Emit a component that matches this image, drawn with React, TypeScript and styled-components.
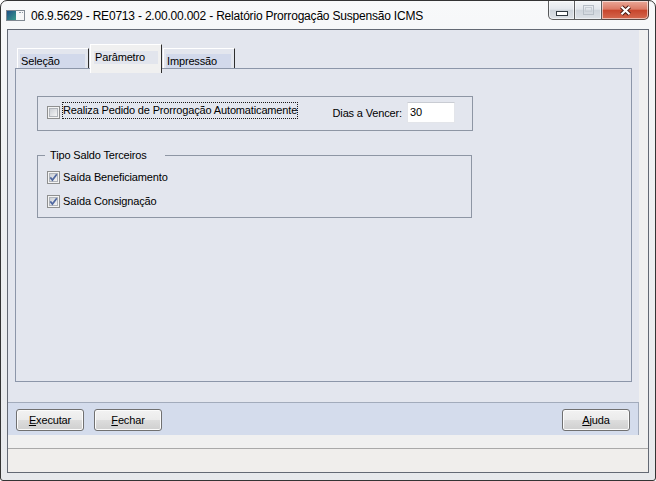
import React from "react";
import styled, { createGlobalStyle } from "styled-components";

const GlobalStyle = createGlobalStyle`
  html, body {
    margin: 0;
    padding: 0;
    background: #ffffff;
    overflow: hidden;
  }
  body {
    font-family: "Liberation Sans", Arial, sans-serif;
    font-size: 11px;
    color: #000;
  }
`;

const tabs = ["Seleção", "Parâmetro", "Impressão"];
const activeTab = 1;

const TitleIcon = () => (
  <svg width="19" height="11" viewBox="0 0 19 11">
    <defs>
      <linearGradient id="ti" x1="0" y1="0" x2="1" y2="1">
        <stop offset="0" stopColor="#1d4f86" />
        <stop offset="1" stopColor="#3c9c8c" />
      </linearGradient>
    </defs>
    <rect x="0.5" y="0.5" width="18" height="10" fill="#f6f7f8" stroke="#7f8891" />
    <rect x="1" y="1" width="9" height="9" fill="url(#ti)" />
    <rect x="13" y="2" width="2" height="1" fill="#8f9aa5" />
    <rect x="16" y="2" width="1" height="1" fill="#8f9aa5" />
  </svg>
);

const MinGlyph = () => (
  <svg width="12" height="5" viewBox="0 0 12 5">
    <rect x="0.5" y="0.5" width="11" height="4" fill="#ffffff" stroke="#2f3840" />
  </svg>
);

const RestoreGlyph = () => (
  <svg width="11" height="10" viewBox="0 0 11 10">
    <rect x="0.5" y="0.5" width="10" height="9" fill="none" stroke="#b7bec6" />
    <rect x="2.5" y="2.5" width="6" height="4" fill="none" stroke="#c8ced5" />
  </svg>
);

const CloseGlyph = () => (
  <svg width="13" height="11" viewBox="0 0 13 11">
    <path d="M2.5 1.8 L10.5 9.2 M10.5 1.8 L2.5 9.2" stroke="#4b1b12" strokeWidth="4.2" />
    <path d="M2.5 1.8 L10.5 9.2 M10.5 1.8 L2.5 9.2" stroke="#ffffff" strokeWidth="2.2" />
  </svg>
);

const CheckBox = ({ checked, top = 0 }: { checked?: boolean; top?: number }) => (
  <CheckBoxBox $top={top}>
    <svg width="13" height="13" viewBox="0 0 13 13">
      <defs>
        <linearGradient id="cbfill" x1="0" y1="0" x2="1" y2="1">
          <stop offset="0" stopColor="#c9cdd3" />
          <stop offset="1" stopColor="#f7f7f7" />
        </linearGradient>
      </defs>
      <rect x="0.5" y="0.5" width="12" height="12" fill="#f4f4f4" stroke="#8e8f8f" />
      <rect x="2.5" y="2.5" width="8" height="8" fill="url(#cbfill)" stroke="#b0b4ba" />
      {checked && (
        <path
          d="M3.3 6.4 L5.4 9 L9.8 3.2"
          stroke="#5068a0"
          strokeWidth="1.7"
          fill="none"
        />
      )}
    </svg>
  </CheckBoxBox>
);

const Hot = ({ text }: { text: string }) => (
  <>
    <u>{text[0]}</u>
    {text.slice(1)}
  </>
);

const App = () => {
  return (
    <>
      <GlobalStyle />
      <Window>
        <TitleBar>
          <TitleLeft>
            <TitleIcon />
            <TitleText>
              06.9.5629 - RE0713 - 2.00.00.002 - Relatório Prorrogação Suspensão ICMS
            </TitleText>
          </TitleLeft>
          <Controls>
            <CtrlButton $w={27} $pos="first">
              <MinGlyph />
            </CtrlButton>
            <CtrlButton $w={27}>
              <RestoreGlyph />
            </CtrlButton>
            <CtrlButton $w={47} $pos="last" $close>
              <CloseGlyph />
            </CtrlButton>
          </Controls>
        </TitleBar>

        <Client>
          <Upper>
            <MainCol>
              <TabsArea>
                <TabStrip>
                  {tabs.map((t, i) => (
                    <Tab key={t} $active={i === activeTab}>
                      <TabLabel $active={i === activeTab}>{t}</TabLabel>
                    </Tab>
                  ))}
                </TabStrip>
                <Page>
                  <Group>
                    <CheckBox top={4} />
                    <FocusLabel>Realiza Pedido de Prorrogação Automaticamente</FocusLabel>
                    <DiasField>
                      <span>Dias a Vencer:</span>
                      <NumInput>30</NumInput>
                    </DiasField>
                  </Group>
                  <Fieldset>
                    <Legend>Tipo Saldo Terceiros</Legend>
                    <CheckRow>
                      <CheckBox checked />
                      <span>Saída Beneficiamento</span>
                    </CheckRow>
                    <CheckRow>
                      <CheckBox checked />
                      <span>Saída Consignação</span>
                    </CheckRow>
                  </Fieldset>
                </Page>
              </TabsArea>
              <ButtonBar>
                <PushButton>
                  <Hot text="Executar" />
                </PushButton>
                <PushButton>
                  <Hot text="Fechar" />
                </PushButton>
                <PushButton $right>
                  <Hot text="Ajuda" />
                </PushButton>
              </ButtonBar>
            </MainCol>
            <SideStrip />
          </Upper>
          <GapStrip />
          <StatusBar />
        </Client>
      </Window>
    </>
  );
};

export default App;

const Window = styled.div`
  width: 656px;
  height: 481px;
  box-sizing: border-box;
  border: 1px solid #343434;
  border-radius: 7px 7px 3px 3px;
  background: linear-gradient(180deg, #f8f9fa 0%, #eef0f2 35%, #e7e9ec 100%);
  padding: 0 6px 7px 6px;
  display: flex;
  flex-direction: column;
  overflow: hidden;
`;

const TitleBar = styled.div`
  height: 28px;
  display: flex;
  align-items: flex-start;
  flex-shrink: 0;
`;

const TitleLeft = styled.div`
  flex: 1;
  height: 28px;
  display: flex;
  align-items: center;
  gap: 6px;
  margin-left: -1px;
  padding-top: 1px;
  box-sizing: border-box;
`;

const TitleText = styled.span`
  font-size: 12px;
  letter-spacing: -0.2px;
  color: #000;
  white-space: nowrap;
  text-shadow: 0 0 6px rgba(255, 255, 255, 0.95), 0 0 10px rgba(255, 255, 255, 0.9);
`;

const Controls = styled.div`
  display: flex;
  height: 19px;
`;

const CtrlButton = styled.div<{ $w: number; $pos?: "first" | "last"; $close?: boolean }>`
  width: ${(p) => p.$w}px;
  height: 19px;
  box-sizing: border-box;
  display: flex;
  align-items: center;
  justify-content: center;
  border: 1px solid rgba(45, 45, 45, 0.75);
  border-top: none;
  border-left: ${(p) => (p.$pos === "first" ? "1px solid rgba(45,45,45,0.75)" : "none")};
  border-radius: ${(p) =>
    p.$pos === "first" ? "0 0 0 5px" : p.$pos === "last" ? "0 0 5px 0" : "0"};
  box-shadow: inset 0 0 0 1px rgba(255, 255, 255, 0.55);
  background: ${(p) =>
    p.$close
      ? "linear-gradient(180deg, #eaa898 0%, #dc7b66 45%, #c8462d 52%, #d5694f 100%)"
      : "linear-gradient(180deg, #f3f5f7 0%, #e3e7ec 45%, #cfd5dc 52%, #dde2e7 100%)"};
  padding-top: ${(p) => (p.$pos === "first" ? "6px" : "0")};
`;

const Client = styled.div`
  flex: 1;
  border: 1px solid #636974;
  background: #f0f0f0;
  display: flex;
  flex-direction: column;
  min-height: 0;
`;

const Upper = styled.div`
  height: 405px;
  display: flex;
  flex-shrink: 0;
`;

const MainCol = styled.div`
  flex: 1;
  background: #e3e6ee;
  display: flex;
  flex-direction: column;
`;

const SideStrip = styled.div`
  width: 9px;
  background: #f0f0f0;
`;

const TabsArea = styled.div`
  flex: 1;
  padding: 14px 7px 20px 7px;
  display: flex;
  flex-direction: column;
`;

const TabStrip = styled.div`
  height: 24px;
  display: flex;
  align-items: flex-end;
  padding-left: 2px;
  gap: 1px;
`;

const Tab = styled.div<{ $active?: boolean }>`
  width: 72px;
  height: ${(p) => (p.$active ? "29px" : "20px")};
  margin-bottom: ${(p) => (p.$active ? "-5px" : "0")};
  position: relative;
  z-index: ${(p) => (p.$active ? 1 : 0)};
  box-sizing: border-box;
  border-top: 1px solid #ffffff;
  border-left: 1px solid #ffffff;
  border-right: 1px solid #2e2e2e;
  background: ${(p) => (p.$active ? "#f0f0f0" : "#e3e6ee")};
  display: flex;
  align-items: ${(p) => (p.$active ? "flex-start" : "flex-end")};
  padding: ${(p) => (p.$active ? "6px 3px 0 3px" : "0 3px 0 2px")};
`;

const TabLabel = styled.div<{ $active?: boolean }>`
  flex: 1;
  height: ${(p) => (p.$active ? "13px" : "14px")};
  line-height: ${(p) => (p.$active ? "12px" : "14px")};
  padding-left: 1px;
  background: ${(p) => (p.$active ? "#e2e5ed" : "#d2d9eb")};
  letter-spacing: -0.15px;
  white-space: nowrap;
`;

const Page = styled.div`
  flex: 1;
  border: 1px solid #8c96a9;
  padding: 27px 0 0 21px;
`;

const Group = styled.div`
  width: 436px;
  height: 35px;
  box-sizing: border-box;
  border: 1px solid #8e96a4;
  display: flex;
  align-items: flex-start;
  padding: 5px 17px 0 9px;
  letter-spacing: -0.15px;
`;

const CheckBoxBox = styled.span<{ $top: number }>`
  display: inline-flex;
  width: 13px;
  height: 13px;
  flex-shrink: 0;
  margin-top: ${(p) => p.$top}px;
`;

const FocusLabel = styled.span`
  margin-left: 2px;
  height: 17px;
  box-sizing: border-box;
  line-height: 15px;
  border: 1px dotted #1a1a1a;
  white-space: nowrap;
`;

const DiasField = styled.div`
  margin-left: auto;
  display: flex;
  align-items: center;
  gap: 5px;
`;

const NumInput = styled.div`
  width: 48px;
  height: 21px;
  box-sizing: border-box;
  background: #ffffff;
  border: 1px solid #e3e5ea;
  border-top-color: #c9ccd3;
  padding-left: 2px;
  line-height: 19px;
`;

const Fieldset = styled.fieldset`
  margin: 18px 0 0 0;
  width: 435px;
  box-sizing: border-box;
  border: 1px solid #8e96a4;
  padding: 3px 0 4px 7px;
  min-inline-size: 0;
  letter-spacing: -0.15px;
`;

const Legend = styled.legend`
  padding: 0 18px 0 5px;
  line-height: 13px;
  font-size: 11px;
`;

const CheckRow = styled.div`
  height: 24px;
  display: flex;
  align-items: center;
  gap: 3px;
  margin-left: 2px;
`;

const ButtonBar = styled.div`
  height: 33px;
  box-sizing: border-box;
  border-top: 1px solid #a2abbb;
  border-right: 1px solid #a2abbb;
  background: #d4dcec;
  display: flex;
  align-items: flex-start;
  gap: 10px;
  padding: 6px 8px 0 8px;
`;

const PushButton = styled.div<{ $right?: boolean }>`
  width: 68px;
  height: 22px;
  box-sizing: border-box;
  margin-left: ${(p) => (p.$right ? "auto" : "0")};
  border: 1px solid #707070;
  border-radius: 3px;
  box-shadow: inset 0 0 0 1px #fbfbfb;
  background: linear-gradient(180deg, #f2f2f2 0%, #ebebeb 49%, #dddddd 51%, #cfcfcf 100%);
  display: flex;
  align-items: center;
  justify-content: center;
  letter-spacing: -0.15px;
  padding-bottom: 1px;
`;

const GapStrip = styled.div`
  height: 13px;
  background: #f0f0f0;
  flex-shrink: 0;
`;

const StatusBar = styled.div`
  flex: 1;
  border-top: 1px solid #a9a9a9;
  background: #f0eeec;
`;
